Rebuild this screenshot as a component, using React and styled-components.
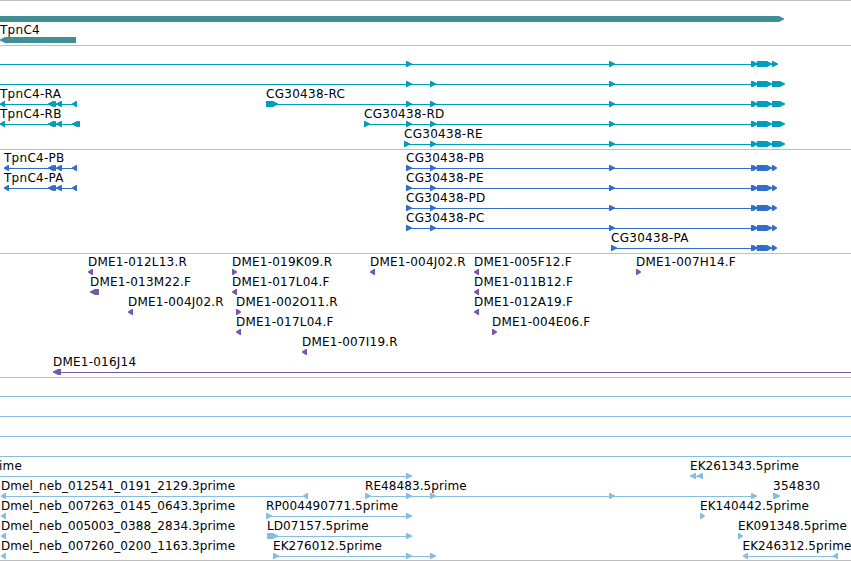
import React from 'react'
import styled, { createGlobalStyle } from 'styled-components'

const GlobalStyle = createGlobalStyle`
    body {
        margin: 0;
        background: #fff;
        overflow: hidden;
    }
`
const Browser = styled.div`
    width: 851px;
    height: 561px;
    overflow: hidden;
    border-bottom: 1px solid #bebebe;
    box-sizing: border-box;
    font-family: "DejaVu Sans", sans-serif;
    font-size: 12px;
    color: #000;
`
const Track = styled.section`
    display: flex;
    flex-direction: column;
    gap: ${({$gap}) => $gap || 0}px;
    padding: 1px 0 ${({$last}) => $last ? `1px` : `2px`};
    border-top: 1px solid #bebebe;
    color: ${({$color}) => $color};
`
const Lane = styled.div`
    position: relative;
    display: flex;
    align-items: flex-end;
    height: 20px;
`
const Glyphs = styled.svg`
    display: block;
    width: 851px;
    height: 6px;
`
const Label = styled.span`
    position: absolute;
    top: 0;
    left: ${({$x}) => $x}px;
    line-height: 14px;
    letter-spacing: ${({$spacing}) => $spacing}px;
    white-space: nowrap;
    color: #000;
`

// an exon is [start, end], the strand gives the side of its blunt head
const exonPoints = (start, end, strand) => {
    const head = Math.min(5, end - start - 1)
    return strand === '+'
        ? `${start},0 ${end - head},0 ${end},2.4 ${end},3.6 ${end - head},6 ${start},6`
        : `${end},0 ${start + head},0 ${start},2.4 ${start},3.6 ${start + head},6 ${end},6`
}

const labelSpacing = (label) => {
    if (label.startsWith('Dmel')) return 0.08
    if (label.endsWith('prime')) return 0.08
    if (label.startsWith('DME1')) return 0.22
    return 0.28
}

const plus = (label, x, exons, line) => ({ label, x, exons, line, strand: '+' })
const minus = (label, x, exons, line) => ({ label, x, exons, line, strand: '-' })

const tail = [[609, 615], [751, 758], [757, 772]]
const longTail = [...tail, [772, 785]]
const cdsTail = [...tail, [772, 777]]
const tpnc4 = [[48, 54], [51, 56], [56, 62]]
const through = { line: [0, 851], exons: [] }

const tracks = [
    {
        name: 'genes', color: '#3f8f94', gap: 1, lanes: [
            [plus('', 0, [[-6, 784]])],
            [minus('TpnC4', 0, [[0, 76]])],
        ],
    },
    {
        name: 'transcripts', color: '#009dbf', lanes: [
            [plus('', 0, [[406, 412], ...tail, [772, 778]], [0, 776])],
            [plus('', 0, [[406, 412], [430, 436], ...longTail], [0, 780])],
            [
                minus('TpnC4-RA', 0, [[0, 5], ...tpnc4, [72, 77]], [0, 77]),
                plus('CG30438-RC', 266, [[266, 278], [406, 412], [430, 436], ...longTail], [266, 780]),
            ],
            [
                minus('TpnC4-RB', 0, [[0, 5], ...tpnc4, [72, 78], [75, 80]], [0, 80]),
                plus('CG30438-RD', 364, [[364, 370], [406, 412], [430, 436], ...longTail], [364, 780]),
            ],
            [plus('CG30438-RE', 404, [[404, 410], [430, 436], ...longTail], [404, 780])],
        ],
    },
    {
        name: 'proteins', color: '#316dce', lanes: [
            [
                minus('TpnC4-PB', 4, [[4, 9], ...tpnc4, [72, 77]], [4, 77]),
                plus('CG30438-PB', 406, [[406, 412], [430, 436], ...cdsTail], [406, 776]),
            ],
            [
                minus('TpnC4-PA', 4, [[4, 9], ...tpnc4, [72, 77]], [4, 77]),
                plus('CG30438-PE', 406, [[406, 412], [430, 436], ...cdsTail], [406, 776]),
            ],
            [plus('CG30438-PD', 406, [[406, 412], [430, 436], ...cdsTail], [406, 776])],
            [plus('CG30438-PC', 406, [[406, 412], [430, 436], ...cdsTail], [406, 776])],
            [plus('CG30438-PA', 611, [[611, 617], ...cdsTail.slice(1)], [611, 776])],
        ],
    },
    {
        name: 'oligos', color: '#7458ab', lanes: [
            [
                minus('DME1-012L13.R', 88, [[88, 93]]),
                plus('DME1-019K09.R', 232, [[232, 237]]),
                minus('DME1-004J02.R', 370, [[370, 375]]),
                minus('DME1-005F12.F', 474, [[474, 479]]),
                plus('DME1-007H14.F', 636, [[636, 641]]),
            ],
            [
                minus('DME1-013M22.F', 90, [[90, 99]]),
                minus('DME1-017L04.F', 232, [[232, 237]]),
                minus('DME1-011B12.F', 474, [[474, 479]]),
            ],
            [
                minus('DME1-004J02.R', 128, [[128, 133]]),
                plus('DME1-002O11.R', 236, [[236, 241]]),
                minus('DME1-012A19.F', 474, [[474, 479]]),
            ],
            [
                minus('DME1-017L04.F', 236, [[236, 241]]),
                plus('DME1-004E06.F', 492, [[492, 497]]),
            ],
            [minus('DME1-007I19.R', 302, [[302, 307]])],
            [minus('DME1-016J14', 53, [[53, 61]], [53, 851])],
        ],
    },
    {
        name: 'ests', color: '#87bde0', lanes: [
            [through],
            [through],
            [through],
            [through],
            [
                plus('ime', -1, [[406, 412]], [0, 412]),
                minus('EK261343.5prime', 690, [[690, 696], [697, 703]], [690, 703]),
            ],
            [
                minus('Dmel_neb_012541_0191_2129.3prime', 1, [[1, 6], [303, 308]], [1, 308]),
                plus('RE48483.5prime', 365, [[365, 371], [406, 412], [430, 436], [609, 615], [751, 757]], [365, 757]),
                plus('354830', 773, [[773, 780]]),
            ],
            [
                minus('Dmel_neb_007263_0145_0643.3prime', 1, [[1, 6]]),
                plus('RP004490771.5prime', 266, [[266, 272], [406, 412]], [266, 412]),
                plus('EK140442.5prime', 700, [[700, 705]]),
            ],
            [
                minus('Dmel_neb_005003_0388_2834.3prime', 1, [[1, 6]]),
                plus('LD07157.5prime', 267, [[267, 278], [406, 412]], [267, 412]),
                plus('EK091348.5prime', 738, [[738, 743]]),
            ],
            [
                minus('Dmel_neb_007260_0200_1163.3prime', 1, [[1, 6]]),
                plus('EK276012.5prime', 273, [[273, 279], [406, 412], [430, 436]], [273, 436]),
                minus('EK246312.5prime', 742.5, [[743, 748], [833, 838]], [743, 838]),
            ],
        ],
    },
]

const Feature = ({ line, exons, strand }) => (
    <g>
        {line && <rect x={line[0]} y="3" width={line[1] - line[0]} height="1" />}
        {exons.map(([start, end]) => (
            <polygon key={start} points={exonPoints(start, end, strand)} />
        ))}
    </g>
)

const App = () => (
    <>
        <GlobalStyle />
        <Browser>
            {tracks.map((track, index) => (
                <Track key={track.name} $color={track.color} $gap={track.gap} $last={index === tracks.length - 1}>
                    {track.lanes.map((lane, row) => (
                        <Lane key={row}>
                            {lane.map((item, i) => item.label && (
                                <Label key={i} $x={item.x} $spacing={labelSpacing(item.label)}>{item.label}</Label>
                            ))}
                            <Glyphs viewBox="0 0 851 6" fill="currentColor">
                                {lane.map((item, i) => <Feature key={i} {...item} />)}
                            </Glyphs>
                        </Lane>
                    ))}
                </Track>
            ))}
        </Browser>
    </>
)

export default App
